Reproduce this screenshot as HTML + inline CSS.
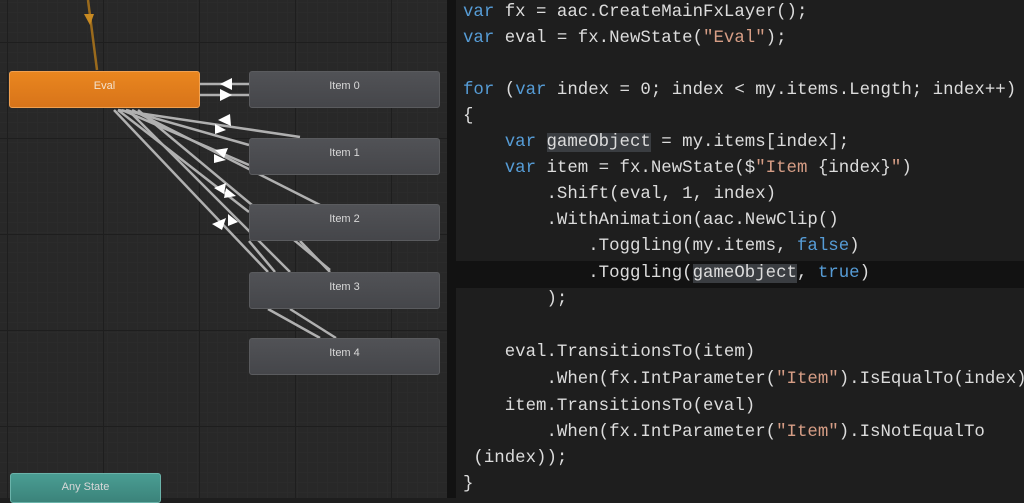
<!DOCTYPE html>
<html><head><style>
html,body{margin:0;padding:0;width:1024px;height:498px;overflow:hidden;background:#1e1e1e}
#left{position:absolute;left:0;top:0;width:447px;height:498px;background-color:#282828;
background-image:linear-gradient(#1e1e1e 1px,transparent 1px),linear-gradient(90deg,#1e1e1e 1px,transparent 1px),linear-gradient(#2b2b2b 1px,transparent 1px),linear-gradient(90deg,#2b2b2b 1px,transparent 1px);
background-size:96px 96px,96px 96px,10px 10px,10px 10px;background-position:7px 42px,7px 42px,7px 2px,7px 2px}
#sep{position:absolute;left:447px;top:0;width:9px;height:498px;background:#121212}
.node{position:absolute;width:191px;height:37px;border-radius:3px;font:11px "Liberation Sans",sans-serif;color:#d8d8d8;text-align:center;line-height:28px;box-sizing:border-box;border:1px solid #5a5b5e}
.item{background:linear-gradient(#515256,#45464a);left:249px}
#code{position:absolute;left:456px;top:0;width:568px;height:498px;font:17.4px "Liberation Mono",monospace;color:#dcdcdc;white-space:pre}
.l{position:absolute;left:7px;height:26px;line-height:26px}
.k{color:#569cd6}.s{color:#d69d85}
.hl{background:#3a3d41}
</style></head><body>
<div id="left">
<svg width="447" height="498" style="position:absolute;left:0;top:0">
<g stroke="#b0b0b0" stroke-width="2.5" fill="none">
<line x1="200" y1="84" x2="249" y2="84"/><line x1="200" y1="95" x2="249" y2="95"/>
<line x1="118" y1="110" x2="300" y2="137"/><line x1="126" y1="110" x2="249" y2="145"/>
<line x1="122" y1="110" x2="249" y2="165"/><line x1="132" y1="110" x2="320" y2="205"/>
<line x1="118" y1="110" x2="249" y2="212"/><line x1="138" y1="110" x2="330" y2="270"/>
<line x1="114" y1="110" x2="268" y2="272"/><line x1="128" y1="110" x2="290" y2="272"/>
<line x1="268" y1="309" x2="320" y2="338"/><line x1="290" y1="309" x2="336" y2="338"/>
<line x1="249" y1="241" x2="275" y2="272"/><line x1="300" y1="241" x2="330" y2="272"/>
</g>
<g fill="#fff">
<polygon points="220,84 232,78 232,90"/><polygon points="232,95 220,89 220,101"/>
<polygon points="218,120 230,114 231,126" /><polygon points="226,130 215,124 215,134"/>
<polygon points="215,150 228,148 224,158"/><polygon points="226,160 214,154 214,163"/>
<polygon points="214,188 226,183 224,194"/><polygon points="226,188 236,196 224,198"/>
<polygon points="212,224 226,218 222,230"/><polygon points="228,214 238,222 228,226"/>
</g>
<line x1="88" y1="0" x2="97" y2="70" stroke="#9a6a1c" stroke-width="2.5"/>
<polygon points="84,14 94,14 90,25" fill="#c88a22"/>
</svg>
<div class="node" style="left:9px;top:71px;background:linear-gradient(#e9861f,#d8741a);border-color:#f0a050;color:#f3e3cf">Eval</div>
<div class="node item" style="top:71px">Item 0</div>
<div class="node item" style="top:138px">Item 1</div>
<div class="node item" style="top:204px">Item 2</div>
<div class="node item" style="top:272px">Item 3</div>
<div class="node item" style="top:338px">Item 4</div>
<div class="node" style="left:10px;top:473px;width:151px;height:30px;background:linear-gradient(#4a9d93,#3b837a);border-color:#6bb3aa;line-height:26px">Any State</div>
</div>
<div id="sep"></div>
<div id="code">
<div style="position:absolute;left:0;top:261px;width:568px;height:27px;background:#121212"></div>
<div class="l" style="top:0"><span class="k">var</span> fx = aac.CreateMainFxLayer();</div>
<div class="l" style="top:26px"><span class="k">var</span> eval = fx.NewState(<span class="s">"Eval"</span>);</div>
<div class="l" style="top:78px"><span class="k">for</span> (<span class="k">var</span> index = 0; index &lt; my.items.Length; index++)</div>
<div class="l" style="top:104px">{</div>
<div class="l" style="top:130px">    <span class="k">var</span> <span class="hl">gameObject</span> = my.items[index];</div>
<div class="l" style="top:156px">    <span class="k">var</span> item = fx.NewState($<span class="s">"Item </span>{index}<span class="s">"</span>)</div>
<div class="l" style="top:182px">        .Shift(eval, 1, index)</div>
<div class="l" style="top:208px">        .WithAnimation(aac.NewClip()</div>
<div class="l" style="top:234px">            .Toggling(my.items, <span class="k">false</span>)</div>
<div class="l" style="top:261px">            .Toggling(<span class="hl">gameObject</span>, <span class="k">true</span>)</div>
<div class="l" style="top:287px">        );</div>
<div class="l" style="top:340px">    eval.TransitionsTo(item)</div>
<div class="l" style="top:367px">        .When(fx.IntParameter(<span class="s">"Item"</span>).IsEqualTo(index)</div>
<div class="l" style="top:394px">    item.TransitionsTo(eval)</div>
<div class="l" style="top:420px">        .When(fx.IntParameter(<span class="s">"Item"</span>).IsNotEqualTo</div>
<div class="l" style="top:446px"> (index));</div>
<div class="l" style="top:472px">}</div>
</div>
</body></html>
